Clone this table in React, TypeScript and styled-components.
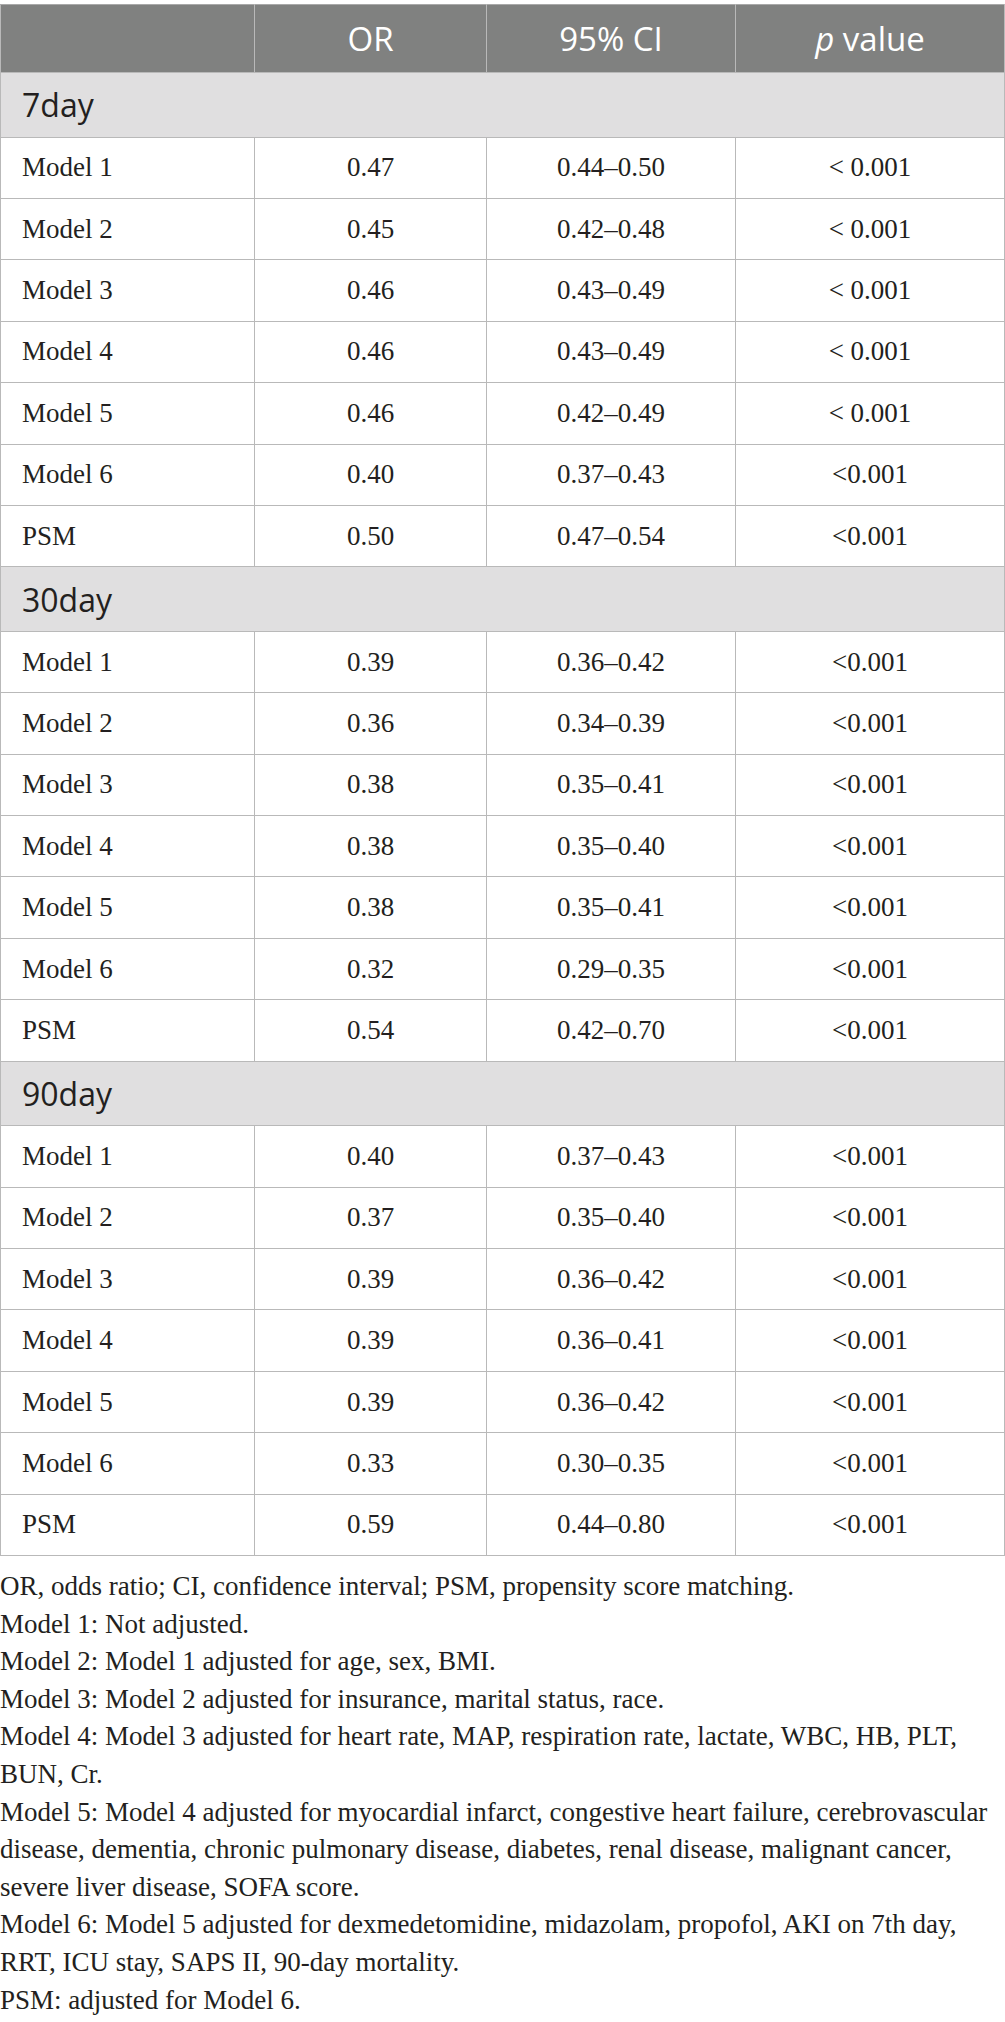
import React from "react";
import styled, { createGlobalStyle } from "styled-components";

const GlobalStyle = createGlobalStyle`
  html, body {
    margin: 0;
    padding: 0;
    background: #ffffff;
  }
`;

const Page = styled.div`
  width: 1005px;
  padding-top: 4px;
  color: #231f20;
`;

const Table = styled.table`
  width: 1004px;
  border-collapse: collapse;
  table-layout: fixed;
`;

const HeadCell = styled.th`
  background: #808180;
  color: #ffffff;
  font-family: "Open Sans", "Noto Sans", sans-serif;
  font-weight: 400;
  font-size: 33px;
  text-align: center;
  height: 67px;
  padding: 0;
  border: 1.5px solid #b9b9b9;
  border-top-color: #a9a9a9;
`;

const SectionCell = styled.td`
  background: #e0dfe0;
  font-family: "Open Sans", "Noto Sans", sans-serif;
  font-size: 32px;
  color: #231f20;
  height: 63.6px;
  padding: 0 0 0 21px;
  border: 1.5px solid #b9b9b9;
`;

const Cell = styled.td<{ $left?: boolean }>`
  font-family: "Liberation Serif", "DejaVu Serif", serif;
  font-size: 27px;
  color: #231f20;
  text-align: ${(p) => (p.$left ? "left" : "center")};
  padding: ${(p) => (p.$left ? "0 0 0 21px" : "0")};
  height: 60.4px;
  border: 1.5px solid #b9b9b9;
`;

const Notes = styled.div`
  padding-top: 12px;
  font-family: "Liberation Serif", "DejaVu Serif", serif;
  font-size: 27px;
  line-height: 37.6px;
  color: #231f20;
`;

const NoteLine = styled.div`
  white-space: nowrap;
`;

type Row = [string, string, string, string];

const sections: { title: string; rows: Row[] }[] = [
  {
    title: "7day",
    rows: [
      ["Model 1", "0.47", "0.44–0.50", "< 0.001"],
      ["Model 2", "0.45", "0.42–0.48", "< 0.001"],
      ["Model 3", "0.46", "0.43–0.49", "< 0.001"],
      ["Model 4", "0.46", "0.43–0.49", "< 0.001"],
      ["Model 5", "0.46", "0.42–0.49", "< 0.001"],
      ["Model 6", "0.40", "0.37–0.43", "<0.001"],
      ["PSM", "0.50", "0.47–0.54", "<0.001"],
    ],
  },
  {
    title: "30day",
    rows: [
      ["Model 1", "0.39", "0.36–0.42", "<0.001"],
      ["Model 2", "0.36", "0.34–0.39", "<0.001"],
      ["Model 3", "0.38", "0.35–0.41", "<0.001"],
      ["Model 4", "0.38", "0.35–0.40", "<0.001"],
      ["Model 5", "0.38", "0.35–0.41", "<0.001"],
      ["Model 6", "0.32", "0.29–0.35", "<0.001"],
      ["PSM", "0.54", "0.42–0.70", "<0.001"],
    ],
  },
  {
    title: "90day",
    rows: [
      ["Model 1", "0.40", "0.37–0.43", "<0.001"],
      ["Model 2", "0.37", "0.35–0.40", "<0.001"],
      ["Model 3", "0.39", "0.36–0.42", "<0.001"],
      ["Model 4", "0.39", "0.36–0.41", "<0.001"],
      ["Model 5", "0.39", "0.36–0.42", "<0.001"],
      ["Model 6", "0.33", "0.30–0.35", "<0.001"],
      ["PSM", "0.59", "0.44–0.80", "<0.001"],
    ],
  },
];

const notes = [
  "OR, odds ratio; CI, confidence interval; PSM, propensity score matching.",
  "Model 1: Not adjusted.",
  "Model 2: Model 1 adjusted for age, sex, BMI.",
  "Model 3: Model 2 adjusted for insurance, marital status, race.",
  "Model 4: Model 3 adjusted for heart rate, MAP, respiration rate, lactate, WBC, HB, PLT,",
  "BUN, Cr.",
  "Model 5: Model 4 adjusted for myocardial infarct, congestive heart failure, cerebrovascular",
  "disease, dementia, chronic pulmonary disease, diabetes, renal disease, malignant cancer,",
  "severe liver disease, SOFA score.",
  "Model 6: Model 5 adjusted for dexmedetomidine, midazolam, propofol, AKI on 7th day,",
  "RRT, ICU stay, SAPS II, 90-day mortality.",
  "PSM: adjusted for Model 6.",
];

export default function App() {
  return (
    <Page>
      <GlobalStyle />
      <Table>
        <colgroup>
          <col style={{ width: 254 }} />
          <col style={{ width: 232 }} />
          <col style={{ width: 249 }} />
          <col style={{ width: 269 }} />
        </colgroup>
        <thead>
          <tr>
            <HeadCell />
            <HeadCell>OR</HeadCell>
            <HeadCell>95% CI</HeadCell>
            <HeadCell>
              <i>p</i> value
            </HeadCell>
          </tr>
        </thead>
        <tbody>
          {sections.map((s) => (
            <React.Fragment key={s.title}>
              <tr>
                <SectionCell colSpan={4}>{s.title}</SectionCell>
              </tr>
              {s.rows.map((r, i) => (
                <tr key={s.title + i}>
                  <Cell $left>{r[0]}</Cell>
                  <Cell>{r[1]}</Cell>
                  <Cell>{r[2]}</Cell>
                  <Cell>{r[3]}</Cell>
                </tr>
              ))}
            </React.Fragment>
          ))}
        </tbody>
      </Table>
      <Notes>
        {notes.map((n) => (
          <NoteLine key={n}>{n}</NoteLine>
        ))}
      </Notes>
    </Page>
  );
}
